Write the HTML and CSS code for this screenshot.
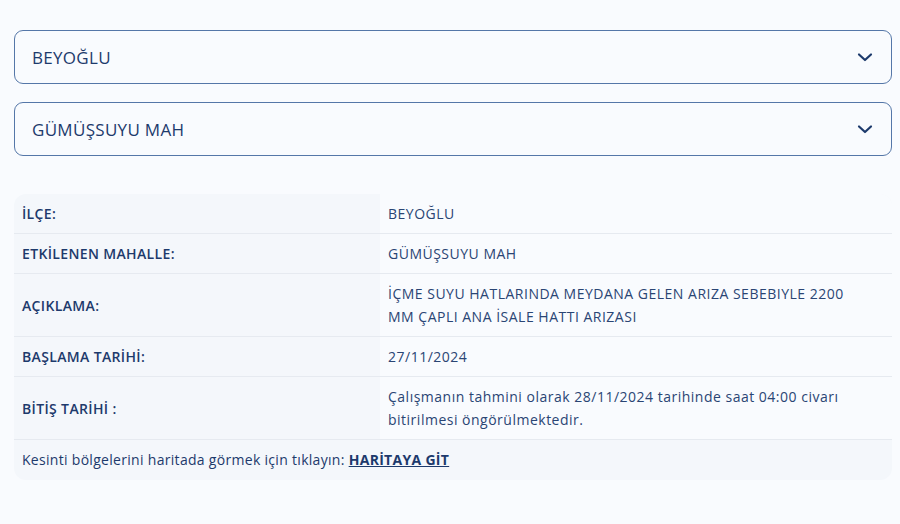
FILE: index.html
```html
<!DOCTYPE html>
<html lang="tr">
<head>
    <meta charset="UTF-8">
    <meta name="viewport" content="width=device-width, initial-scale=1.0">
    <title>Kesinti Bilgisi</title>
    <link rel="stylesheet" href="styles.css">
</head>
<body>
    <div class="wrap">
        <!-- Ilce secimi -->
        <div class="select">
            <span>BEYOĞLU</span>
            <svg class="chev" width="18" height="18" viewBox="0 0 18 18"><path d="M3 6.5l6 5.5 6-5.5" fill="none" stroke="#1d3a6c" stroke-width="2.2" stroke-linecap="round" stroke-linejoin="round"/></svg>
        </div>

        <!-- Mahalle secimi -->
        <div class="select">
            <span>GÜMÜŞSUYU MAH</span>
            <svg class="chev" width="18" height="18" viewBox="0 0 18 18"><path d="M3 6.5l6 5.5 6-5.5" fill="none" stroke="#1d3a6c" stroke-width="2.2" stroke-linecap="round" stroke-linejoin="round"/></svg>
        </div>

        <!-- Kesinti detay tablosu -->
        <div class="card">
            <table class="info">
                <tr>
                    <th>İLÇE:</th>
                    <td>BEYOĞLU</td>
                </tr>
                <tr>
                    <th>ETKİLENEN MAHALLE:</th>
                    <td>GÜMÜŞSUYU MAH</td>
                </tr>
                <tr>
                    <th>AÇIKLAMA:</th>
                    <td>İÇME SUYU HATLARINDA MEYDANA GELEN ARIZA SEBEBIYLE 2200 MM ÇAPLI ANA İSALE HATTI ARIZASI</td>
                </tr>
                <tr>
                    <th>BAŞLAMA TARİHİ:</th>
                    <td>27/11/2024</td>
                </tr>
                <tr>
                    <th>BİTİŞ TARİHİ :</th>
                    <td>Çalışmanın tahmini olarak 28/11/2024 tarihinde saat 04:00 civarı bitirilmesi öngörülmektedir.</td>
                </tr>
            </table>
            <div class="foot">Kesinti bölgelerini haritada görmek için tıklayın: <a href="#">HARİTAYA GİT</a></div>
        </div>
    </div>
</body>
</html>
```

FILE: styles.css
```css
body {
    margin: 0;
    background: #f9fbfe;
    font-family: "Open Sans", "Noto Sans", sans-serif;
    color: #1d3a6c;
}
.wrap {
    padding: 30px 8px 0 14px;
}
.select {
    display: flex;
    align-items: center;
    justify-content: space-between;
    height: 52px;
    padding: 0 17px;
    border: 1.5px solid #5577a8;
    border-radius: 9px;
    font-size: 17px;
    letter-spacing: 0.3px;
    margin-bottom: 18px;
}
.chev {
    display: block;
}
.card {
    margin-top: 38px;
    background: #f4f7fb;
    border-radius: 12px;
    overflow: hidden;
}
.info {
    width: 100%;
    border-collapse: collapse;
    font-size: 14px;
    line-height: 23px;
}
.info th,
.info td {
    padding: 8px;
    border-bottom: 1px solid #e6eaf0;
    text-align: left;
    vertical-align: middle;
}
.info th {
    width: 350px;
    font-weight: 600;
    letter-spacing: 0.35px;
    color: #1d3a6c;
}
.info td {
    padding-right: 30px;
    background: #f9fbfe;
    color: #2a4574;
    letter-spacing: 0.5px;
}
.foot {
    padding: 8px 8px 9px;
    font-size: 14px;
    line-height: 23px;
    letter-spacing: 0.3px;
    color: #1d3a6c;
}
.foot a {
    color: #1d3a6c;
    font-weight: 700;
}
```
